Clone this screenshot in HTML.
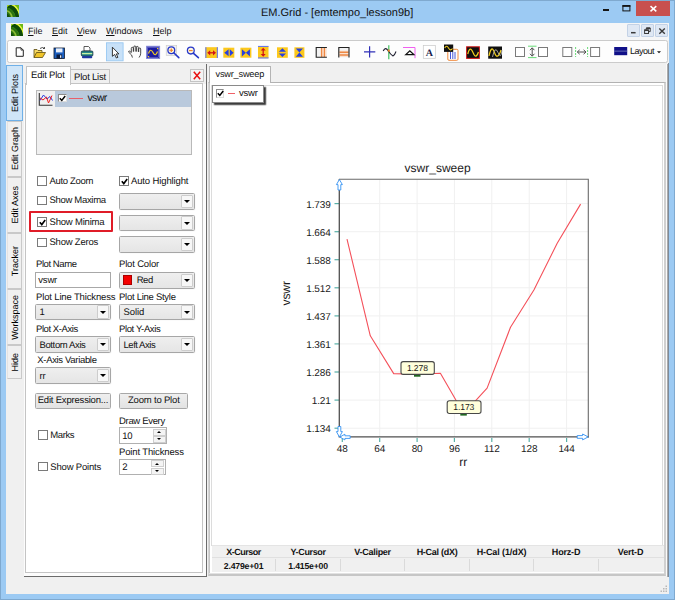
<!DOCTYPE html>
<html>
<head>
<meta charset="utf-8">
<title>EM.Grid</title>
<style>
html,body{margin:0;padding:0;}
body{text-rendering:geometricPrecision;width:675px;height:600px;overflow:hidden;background:#9ccaf3;font-family:"Liberation Sans",sans-serif;font-size:9px;color:#000;position:relative;}
.a{position:absolute;}
.t{position:absolute;white-space:nowrap;line-height:1;}
#win{left:0;top:0;width:675px;height:600px;background:#9ccaf3;box-sizing:border-box;border:1px solid #7fa9cf;}
#title{left:261px;top:7.6px;font-size:11px;color:#111;}
.mdib{top:24.3px;width:13.2px;height:12.6px;background:#dfe8f4;border:1px solid #c3d2e6;box-sizing:border-box;border-radius:1px;}
#client{left:6px;top:23px;width:663px;height:571px;background:#f0f0f0;}
#menubar{left:6px;top:23px;width:663px;height:17px;background:#f5f6f7;}
#toolbar{left:6.5px;top:40px;width:661.5px;height:23px;background:#fdfdfd;border:1px solid #cbcbcb;box-sizing:border-box;border-radius:2.5px;}
.menu{top:27px;font-size:9px;color:#111;}
.menu u{text-decoration:underline;}
/* vertical tabs */
.vtab{left:7px;width:15px;background:#f0f0f0;border:1px solid #c9c9c9;border-left-color:#e3e3e3;box-sizing:border-box;display:flex;align-items:center;justify-content:center;}
.vtab span{position:relative;left:0.8px;writing-mode:vertical-rl;transform:rotate(180deg);font-size:9px;line-height:1;white-space:nowrap;}
.vtab.sel{left:6px;width:17px;background:#cfe5f8;border-color:#6fb0e8;}
.vtxt{position:absolute;white-space:nowrap;font-size:9px;line-height:1;transform-origin:0 0;transform:rotate(-90deg);}
/* left dock */
#ldock{left:25px;top:83px;width:178px;height:490px;background:#fff;border:1px solid #c4c4c4;box-sizing:border-box;}
.cb{position:absolute;width:9.6px;height:9.6px;border:1px solid #7a7a7a;background:#fff;box-sizing:border-box;}
.c3{border-color:#8c8c8c #dcdcdc #dcdcdc #8c8c8c !important;}
.combo{position:absolute;width:76px;height:16.6px;border:1px solid #a6a6a6;background:linear-gradient(#efefef,#e5e5e5);box-sizing:border-box;border-radius:1.5px;box-shadow:0.5px 0.5px 0 0.3px #fafafa;}
.combo .btn{position:absolute;right:0.8px;top:0.8px;width:12.2px;height:13.2px;background:#f7f7f7;border:1px solid #cdcdcd;box-sizing:border-box;border-radius:1px;}
.combo .arr{position:absolute;right:3.9px;top:6.2px;width:0;height:0;border-left:3.1px solid transparent;border-right:3.1px solid transparent;border-top:3.2px solid #000;}
.btnx{position:absolute;border:1px solid #a8a8a8;background:linear-gradient(#efefef,#e2e2e2);box-sizing:border-box;text-align:center;font-size:9.5px;letter-spacing:-0.12px;white-space:nowrap;border-radius:1.5px;color:#111;}
.spin{width:48px;height:16.6px;background:#fff;border:1px solid #b0b0b0;box-sizing:border-box;}
.spin i{position:absolute;right:0.3px;width:13.2px;height:7.2px;background:#f4f4f4;border:1px solid #cfcfcf;box-sizing:border-box;}
.spin .su{top:0.5px}.spin .sd{top:7.8px}
.spin .su:after,.spin .sd:after{content:"";position:absolute;left:3.1px;top:1.3px;border-left:2.5px solid transparent;border-right:2.5px solid transparent;}
.spin .su:after{border-bottom:2.6px solid #000}.spin .sd:after{border-top:2.6px solid #000}
.th,.td{text-align:center;font-size:9px;color:#111;}
.th{font-weight:bold;letter-spacing:-0.45px;}
.td{font-weight:bold;font-size:8.7px;letter-spacing:-0.2px;}
.lbl{position:absolute;white-space:nowrap;font-size:9.5px;letter-spacing:-0.2px;line-height:1;color:#111;}
</style>
</head>
<body>
<div id="win" class="a"></div>

<!-- title bar -->
<svg class="a" style="left:7px;top:5px" width="12" height="12" viewBox="0 0 12 12"><rect width="12" height="12" fill="#6cb818"/><path d="M4 0Q11 3 12 11V5.5Q10 1.5 7.5 0Z" fill="#eaf640"/><path d="M0 0H4Q11 3 12 11V12H8.5Q7 4.5 0 2.5Z" fill="#0e4a0a"/><path d="M0 0H3.2Q1.2 0.8 0 2.2Z" fill="#a4d424"/><path d="M0 2.5Q7 4.5 8.5 12H0Z" fill="#2c7410"/><path d="M0 5Q4.8 6.8 5.8 12H4Q3.4 8 0 6.8Z" fill="#8cba34"/><path d="M0 8.5Q2.4 9.5 2.8 12H0Z" fill="#15500c"/></svg>
<div id="title" class="t">EM.Grid - [emtempo_lesson9b]</div>
<div class="a" style="left:603px;top:9.3px;width:6.3px;height:2.1px;background:#151515"></div>
<svg class="a" style="left:621px;top:4px" width="11" height="9" viewBox="621 4 11 9"><rect x="622.9" y="5.9" width="7" height="5" fill="none" stroke="#151515" stroke-width="1"/><rect x="622.4" y="5" width="8" height="1.8" fill="#151515"/></svg>
<div class="a" style="left:636px;top:1px;width:34px;height:14.5px;background:#c8504e"></div>
<svg class="a" style="left:649px;top:5px" width="9" height="8" viewBox="649 5 9 8"><path d="M650.5 6.1L656.3 11.4M656.3 6.1L650.5 11.4" stroke="#fff" stroke-width="1.5"/></svg>
<div id="client" class="a"></div>
<div id="menubar" class="a"></div>
<svg class="a" style="left:11px;top:24px" width="12" height="12" viewBox="0 0 12 12"><rect width="12" height="12" fill="#6cb818"/><path d="M4 0Q11 3 12 11V5.5Q10 1.5 7.5 0Z" fill="#eaf640"/><path d="M0 0H4Q11 3 12 11V12H8.5Q7 4.5 0 2.5Z" fill="#0e4a0a"/><path d="M0 0H3.2Q1.2 0.8 0 2.2Z" fill="#a4d424"/><path d="M0 2.5Q7 4.5 8.5 12H0Z" fill="#2c7410"/><path d="M0 5Q4.8 6.8 5.8 12H4Q3.4 8 0 6.8Z" fill="#8cba34"/><path d="M0 8.5Q2.4 9.5 2.8 12H0Z" fill="#15500c"/></svg>
<div class="t menu" style="left:28px"><u>F</u>ile</div>
<div class="t menu" style="left:52px"><u>E</u>dit</div>
<div class="t menu" style="left:77px"><u>V</u>iew</div>
<div class="t menu" style="left:106px"><u>W</u>indows</div>
<div class="t menu" style="left:153px"><u>H</u>elp</div>
<!-- mdi buttons -->
<div class="a mdib" style="left:626.6px"></div>
<div class="a mdib" style="left:640.8px"></div>
<div class="a mdib" style="left:655px"></div>
<svg class="a" style="left:626px;top:24px" width="43" height="14" viewBox="626 24 43 14"><path d="M631 32.7H635.6" stroke="#3a3a3a" stroke-width="1.5"/><path d="M646.3 29.5V28H650.2V31.6H648.7" stroke="#3a3a3a" stroke-width="1" fill="none"/><rect x="644.6" y="29.9" width="3.9" height="3.6" fill="none" stroke="#3a3a3a" stroke-width="1"/><path d="M644.6 30.2H648.5M646.3 28.3H650.2" stroke="#3a3a3a" stroke-width="1.4"/><path d="M659.3 28.6L664.8 33.7M664.8 28.6L659.3 33.7" stroke="#3a3a3a" stroke-width="1.4"/></svg>
<div id="toolbar" class="a"></div>

<!-- vertical tabs -->
<div class="a vtab sel" style="top:65px;height:56px"><span>Edit Plots</span></div>
<div class="a vtab" style="top:121px;height:56px"><span>Edit Graph</span></div>
<div class="a vtab" style="top:177px;height:56px"><span>Edit Axes</span></div>
<div class="a vtab" style="top:233px;height:56px"><span>Tracker</span></div>
<div class="a vtab" style="top:289px;height:56px"><span>Workspace</span></div>
<div class="a vtab" style="top:345px;height:34px"><span>Hide</span></div>
<!-- left dock -->
<div class="a" style="left:24px;top:84px;width:182px;height:492px;background:#fcfcfc"></div>
<div id="ldock" class="a"></div>
<div class="a" style="left:24px;top:576px;width:183px;height:1px;background:#6b6b6b"></div>
<div class="a" style="left:206px;top:64px;width:1px;height:513px;background:#6b6b6b"></div>
<div class="a" style="left:70px;top:69px;width:40px;height:15px;background:#f0f0f0;border:1px solid #c4c4c4;box-sizing:border-box"></div>
<div class="a" style="left:26px;top:66px;width:45px;height:19px;background:#fff;border:1px solid #c4c4c4;border-bottom:none;box-sizing:border-box"></div>
<div class="lbl" style="left:31px;top:71px">Edit Plot</div>
<div class="lbl" style="left:74px;top:73px">Plot List</div>
<div class="a" style="left:190px;top:69px;width:14px;height:13px;background:#f4f4f4;border:1px solid #c4c4c4;box-sizing:border-box"></div>
<svg class="a" style="left:193px;top:71px" width="8" height="9" viewBox="0 0 8 9"><path d="M0.8 0.8L7.2 8.2M7.2 0.8L0.8 8.2" stroke="#e81010" stroke-width="1.5"/></svg>
<!-- list -->
<div class="a" style="left:36px;top:90px;width:156px;height:65px;background:#f0f0f0;border:1px solid #b9b9b9;box-sizing:border-box"></div>
<div class="a" style="left:55px;top:91px;width:136px;height:16px;background:#b9c9dc"></div>
<svg class="a" style="left:38px;top:92px" width="16" height="15" viewBox="0 0 16 15"><path d="M1.3 1V13.3H14.5" stroke="#333" stroke-width="1.1" fill="none"/><path d="M2 8.5L5.5 3L9 7L12 4.5L14.5 8.5" stroke="#2838e0" stroke-width="1" fill="none"/><path d="M2 6L5 8L8.5 5L10.5 11L14 3.5" stroke="#f02020" stroke-width="1" fill="none"/></svg>
<div class="cb c3" style="left:57.7px;top:93.7px;width:9px;height:8.8px"></div>
<svg class="a" style="left:58.8px;top:94.6px" width="7" height="7" viewBox="0 0 7 7"><path d="M0.8 3.2L2.8 5.4L6.2 1" stroke="#000" stroke-width="1.5" fill="none"/></svg>
<div class="a" style="left:69.3px;top:98px;width:13.7px;height:1.4px;background:#e8606a"></div>
<div class="lbl" style="left:87.4px;top:92.6px;font-size:10.5px;letter-spacing:-0.6px">vswr</div>
<!-- checkboxes -->
<div class="cb" style="left:37.3px;top:176px"></div><div class="lbl" style="left:49.5px;top:176.6px;letter-spacing:-0.33px;">Auto Zoom</div>
<div class="cb" style="left:119px;top:176px"></div><svg class="a" style="left:120.5px;top:177.5px" width="7" height="7" viewBox="0 0 7 7"><path d="M0.8 3.2L2.8 5.6L6.2 1" stroke="#000" stroke-width="1.6" fill="none"/></svg><div class="lbl" style="left:131px;top:176.6px;letter-spacing:-0.13px;">Auto Highlight</div>
<div class="cb" style="left:37.3px;top:195.6px"></div><div class="lbl" style="left:49.5px;top:196px;letter-spacing:-0.31px;">Show Maxima</div>
<div class="combo" style="left:119px;top:193px;height:16.6px"><div class="btn"></div><div class="arr"></div></div>
<div class="a" style="left:29px;top:211.3px;width:84px;height:21.2px;border:2px solid #e01c28;box-sizing:border-box;border-radius:1px"></div>
<div class="cb" style="left:37.3px;top:217.2px"></div><svg class="a" style="left:38.8px;top:218.7px" width="7" height="7" viewBox="0 0 7 7"><path d="M0.8 3.2L2.8 5.6L6.2 1" stroke="#000" stroke-width="1.6" fill="none"/></svg><div class="lbl" style="left:49.5px;top:217.7px;letter-spacing:-0.19px;">Show Minima</div>
<div class="combo" style="left:119px;top:214.7px;height:16.6px"><div class="btn"></div><div class="arr"></div></div>
<div class="cb" style="left:37.3px;top:237.5px"></div><div class="lbl" style="left:49.5px;top:238.2px;letter-spacing:-0.22px;">Show Zeros</div>
<div class="combo" style="left:119px;top:236.2px;height:16.6px"><div class="btn"></div><div class="arr"></div></div>
<!-- fields -->
<div class="lbl" style="left:36px;top:259.8px;letter-spacing:-0.43px;">Plot Name</div>
<div class="lbl" style="left:119px;top:259.8px;letter-spacing:-0.17px;">Plot Color</div>
<div class="a" style="left:35px;top:272px;width:76px;height:16.4px;background:#fff;border:1px solid #a8a8a8;box-sizing:border-box"></div><div class="lbl" style="left:38.3px;top:275.8px;">vswr</div>
<div class="combo" style="left:119px;top:272px;height:16.6px"><div class="btn"></div><div class="arr"></div></div>
<div class="a" style="left:122.5px;top:275.3px;width:9.8px;height:9.8px;background:#f40000;border:1px solid #a00;box-sizing:border-box"></div><div class="lbl" style="left:136.7px;top:275.7px;letter-spacing:-0.45px;">Red</div>
<div class="lbl" style="left:36px;top:292.5px;letter-spacing:-0.15px;">Plot Line Thickness</div>
<div class="lbl" style="left:119px;top:292.5px;letter-spacing:-0.27px;">Plot Line Style</div>
<div class="combo" style="left:35px;top:303.6px;height:16.6px"><div class="btn"></div><div class="arr"></div><div class="lbl" style="left:3.5px;top:3.6px;">1</div></div>
<div class="combo" style="left:119px;top:303.6px;height:16.6px"><div class="btn"></div><div class="arr"></div><div class="lbl" style="left:3.5px;top:3.6px;letter-spacing:-0.06px;">Solid</div></div>
<div class="lbl" style="left:36px;top:324.7px;letter-spacing:-0.43px;">Plot X-Axis</div>
<div class="lbl" style="left:119px;top:324.7px;letter-spacing:-0.37px;">Plot Y-Axis</div>
<div class="combo" style="left:35px;top:336.3px;height:16.6px"><div class="btn"></div><div class="arr"></div><div class="lbl" style="left:3.5px;top:3.6px;letter-spacing:-0.38px;">Bottom Axis</div></div>
<div class="combo" style="left:119px;top:336.3px;height:16.6px"><div class="btn"></div><div class="arr"></div><div class="lbl" style="left:3.5px;top:3.6px;letter-spacing:-0.47px;">Left Axis</div></div>
<div class="lbl" style="left:37.3px;top:355.6px;letter-spacing:-0.33px;">X-Axis Variable</div>
<div class="combo" style="left:35px;top:367px;height:16.6px"><div class="btn"></div><div class="arr"></div><div class="lbl" style="left:3.5px;top:3.6px;">rr</div></div>
<div class="btnx" style="left:35px;top:392.5px;width:75.8px;height:16px;line-height:14px;letter-spacing:-0.19px;">Edit Expression...</div>
<div class="btnx" style="left:119.4px;top:392.5px;width:68.8px;height:16px;line-height:14px;letter-spacing:-0.19px;">Zoom to Plot</div>
<div class="lbl" style="left:119px;top:416.6px;letter-spacing:-0.32px;">Draw Every</div>
<div class="a spin" style="left:119px;top:427.4px"><i class="su"></i><i class="sd"></i></div><div class="lbl" style="left:122.2px;top:431.6px;">10</div>
<div class="cb" style="left:38.4px;top:430.3px"></div><div class="lbl" style="left:50.3px;top:431.4px;letter-spacing:-0.40px;">Marks</div>
<div class="lbl" style="left:119px;top:447.6px;letter-spacing:-0.14px;">Point Thickness</div>
<div class="a spin" style="left:119px;top:458.8px;width:46.5px"><i class="su"></i><i class="sd"></i></div><div class="lbl" style="left:122.2px;top:462.8px;">2</div>
<div class="cb" style="left:38.4px;top:461.8px"></div><div class="lbl" style="left:50.3px;top:462.6px;letter-spacing:-0.18px;">Show Points</div>
<!-- toolbar icons -->
<svg class="a" style="left:0;top:40px" width="675" height="24" viewBox="0 40 675 24">
<!-- new -->
<path d="M16.2 47.8H21L23.3 50.1V56.3H16.2Z" fill="#fff" stroke="#222" stroke-width="1"/><path d="M21 47.8V50.1H23.3" fill="none" stroke="#222" stroke-width="0.8"/>
<!-- open -->
<path d="M34 57.5V49.5H37L38 50.5H42V52" fill="#f6d860" stroke="#5a4a10" stroke-width="0.8"/><path d="M34 57.5L36.5 52.5H45.5L42.5 57.5Z" fill="#f0c428" stroke="#5a4a10" stroke-width="0.8"/><path d="M40 48.5Q42.5 46.5 44.5 48.5M44.5 48.5V47M44.5 48.5H43" stroke="#222" stroke-width="0.8" fill="none"/>
<!-- save -->
<rect x="54" y="48" width="10.5" height="10.5" fill="#1c5fc0" stroke="#101828" stroke-width="0.8"/><rect x="56" y="48.4" width="6.5" height="4" fill="#e8eef8"/><rect x="56.5" y="54.5" width="5.5" height="4" fill="#0c1c3c"/><rect x="60" y="55.3" width="1.3" height="2.5" fill="#e8eef8"/>
<!-- print -->
<path d="M84 51V46.5H88.5L90 48V51Z" fill="#fff" stroke="#333" stroke-width="0.8"/><rect x="81.3" y="51" width="11.6" height="5" rx="1" fill="#2a8a8a" stroke="#123" stroke-width="0.7"/><rect x="82" y="53" width="10.2" height="1.2" fill="#c8f0a0"/><rect x="82" y="56" width="10.2" height="2.2" rx="0.8" fill="#2038a0"/>
<!-- select -->
<rect x="106.5" y="42.8" width="16.6" height="18" fill="#c8e1f8" stroke="#98c8f2" stroke-width="0.9"/>
<path d="M112.4 47.2V56.3L114.7 54.4L116.4 58L117.9 57.3L116.3 53.9H118.9Z" fill="#fdfdfd" stroke="#222" stroke-width="0.9" stroke-linejoin="round"/>
<!-- hand -->
<path d="M132.3 57.2L131.6 55L128.7 52.2Q128.3 51 129.6 51.1L131.3 52.6V48.4Q131.3 47.3 132.3 47.3Q133.3 47.3 133.3 48.4V51.2M133.7 51.2V47Q133.7 46 134.8 46Q135.9 46 135.9 47V51.2M136.3 51.2V47.4Q136.3 46.4 137.3 46.4Q138.3 46.4 138.3 47.4V51.4M138.7 51.6V49Q138.7 48 139.7 48Q140.7 48 140.7 49V53.2Q140.7 55.4 139.3 57.2" fill="none" stroke="#2a2a2a" stroke-width="0.85" stroke-linejoin="round" stroke-linecap="round"/>
<!-- scope -->
<rect x="146.6" y="46.3" width="13" height="12.2" fill="#1c1ca0" stroke="#8488d8" stroke-width="1"/><rect x="147.8" y="47.5" width="10.6" height="9.8" fill="none" stroke="#a8a8e0" stroke-width="0.4"/><path d="M148.5 53.5Q150.5 47.5 153 52.5T157.5 51.5" stroke="#f4d020" stroke-width="1.2" fill="none"/><rect x="148" y="56" width="1.2" height="1.2" fill="#f4d020"/><rect x="157" y="48" width="1.2" height="1.2" fill="#f4d020"/>
<!-- zoom in -->
<rect x="166.2" y="45.5" width="10.5" height="10" fill="#f0f0f0" stroke="#c8c8c8" stroke-width="0.6"/>
<circle cx="171.3" cy="50.3" r="3.4" fill="#fff8e0" stroke="#2838c8" stroke-width="1.3"/><path d="M174 53L178.8 57.6" stroke="#2838c8" stroke-width="1.6" stroke-linecap="round"/><path d="M169.5 50.3H173.1M171.3 48.5V52.1" stroke="#f08020" stroke-width="1.1"/>
<!-- zoom out -->
<circle cx="190.8" cy="50.6" r="3.4" fill="#fff8e0" stroke="#2838c8" stroke-width="1.3"/><path d="M193.5 53.3L198.4 57.6" stroke="#2838c8" stroke-width="1.6" stroke-linecap="round"/><path d="M189 50.6H192.6" stroke="#f08020" stroke-width="1.1"/>
<!-- 6 yellow icons -->
<rect x="205.4" y="47.2" width="12.3" height="10.8" fill="#fcc81c"/><rect x="205.3" y="47.2" width="1.1" height="10.8" fill="#6878ec"/><rect x="216.8" y="47.2" width="1.1" height="10.8" fill="#6878ec"/><path d="M207.2 52.8L210.2 50.2V55.4ZM216 52.8L213 50.2V55.4Z" fill="#d01418"/><path d="M209.5 52.8H214" stroke="#d01418" stroke-width="1.3"/>
<rect x="223.3" y="47.7" width="11" height="10" fill="#fcc81c"/><path d="M224.3 52.8L228.6 49.3V56.3ZM233.6 52.8L229.8 49.3V56.3Z" fill="#2840e0"/>
<rect x="240.4" y="47.7" width="11" height="10" fill="#fcc81c"/><path d="M241.9 49.2V56.4L245.9 52.8ZM249.9 49.2V56.4L245.9 52.8Z" fill="#2840e0"/>
<rect x="258" y="46.4" width="10.5" height="11.8" fill="#fcc81c"/><rect x="258" y="45.9" width="10.5" height="1.1" fill="#6878ec"/><rect x="258" y="57.4" width="10.5" height="1.1" fill="#6878ec"/><path d="M263.2 47.7L260.7 50.6H265.7ZM263.2 56.8L260.7 53.9H265.7Z" fill="#d01418"/><path d="M263.2 50V54.5" stroke="#d01418" stroke-width="1.3"/>
<rect x="277" y="47.3" width="10.8" height="10.5" fill="#fcc81c"/><path d="M282.4 48.3L278.8 51.8H286ZM282.4 57L278.8 53.5H286Z" fill="#2840e0"/>
<rect x="294.4" y="47.3" width="10" height="10.5" fill="#fcc81c"/><path d="M295.8 48.5H303L299.4 52.6ZM295.8 56.8H303L299.4 52.6Z" fill="#2840e0"/>
<!-- band icons -->
<rect x="316.2" y="47.5" width="10.5" height="9.8" fill="#f2f2f2"/><rect x="320.6" y="48" width="6" height="9" fill="#fbe2d0"/><path d="M321.6 48V57M324.4 48V57" stroke="#ee8844" stroke-width="1.3"/><path d="M326.9 47.5H316.2V57.3H326.9" fill="none" stroke="#222" stroke-width="1.1"/>
<rect x="338.8" y="47.5" width="10.2" height="9.8" fill="#f2f2f2"/><rect x="339.5" y="50.6" width="9" height="6.4" fill="#fbe2d0"/><path d="M339.5 52.2H348.5M339.5 55H348.5" stroke="#ee8844" stroke-width="1.5"/><path d="M338.8 57.5V47.5H349V57.5" fill="none" stroke="#222" stroke-width="1.1"/>
<!-- plus -->
<path d="M364 51.8H375.3M369.6 46.2V57.6" stroke="#3030b8" stroke-width="1.2"/>
<!-- sine w/ green -->
<path d="M388.8 45.3V59.2" stroke="#40c060" stroke-width="1.2"/><path d="M383.2 51Q385.5 46.5 388 50.5T393 56Q394.5 55.5 396 51.5" stroke="#223" stroke-width="1.1" fill="none"/><rect x="387.8" y="49.6" width="2" height="2" fill="#f08020"/>
<!-- magenta corner -->
<path d="M403 47.5H415V58.2" stroke="#f060f0" stroke-width="1" fill="none"/><path d="M405.8 54.6L409.8 50.8L413.8 54.6Z" stroke="#111" stroke-width="1.3" fill="none" stroke-linejoin="miter"/>
<!-- A -->
<rect x="423.3" y="45.5" width="12" height="12.8" fill="#fff" stroke="#c8c8c8" stroke-width="0.7"/>
<text x="429.3" y="55.8" font-family="Liberation Serif" font-weight="bold" font-size="10" text-anchor="middle" fill="#18204c">A</text>
<!-- scope+bars -->
<rect x="447.8" y="49.3" width="10.2" height="11" rx="1.2" fill="#fff" stroke="#f08838" stroke-width="1"/><path d="M450.5 52V59M452.8 52V59M455 52V59" stroke="#4858d8" stroke-width="1"/>
<rect x="444" y="44.5" width="9.2" height="7.4" fill="#101010"/><path d="M444.8 48Q446.5 44.5 448.5 48T452.5 48.5" stroke="#f4d020" stroke-width="1.1" fill="none"/>
<!-- red scope -->
<rect x="466.6" y="46.8" width="12.8" height="11.6" fill="#101010" stroke="#d01818" stroke-width="1"/><path d="M467.8 54Q470 45 473 52.5T478.4 52" stroke="#f4d020" stroke-width="1.2" fill="none"/>
<rect x="488.2" y="46.5" width="13.8" height="12.2" fill="#101010"/><path d="M489 56Q491.5 44 494.5 52.5T501 50" stroke="#f4d020" stroke-width="1.2" fill="none"/><path d="M492.5 57Q495 45 498 52.5T502 50" stroke="#b0b0b0" stroke-width="0.9" fill="none"/>
<!-- boxes -->
<rect x="515.5" y="47.5" width="9" height="9" fill="#fff" stroke="#7a7a7a" stroke-width="1"/>
<rect x="538.5" y="47.5" width="9" height="9" fill="#fff" stroke="#7a7a7a" stroke-width="1"/>
<path d="M528 46.2H536.5M528 57.6H536.5" stroke="#58d868" stroke-width="0.9"/><path d="M532.2 48V56M530 50.2L532.2 47.8L534.4 50.2M530 53.8L532.2 56.2L534.4 53.8" stroke="#505050" stroke-width="1" fill="none"/>
<rect x="562.8" y="47.5" width="9" height="9" fill="#fff" stroke="#7a7a7a" stroke-width="1"/>
<rect x="590.6" y="47.5" width="9" height="9" fill="#fff" stroke="#7a7a7a" stroke-width="1"/>
<path d="M575.6 47V57M587.6 47V57" stroke="#58d868" stroke-width="0.9" stroke-dasharray="2 1"/><path d="M577.4 52H585.9M579.7 49.8L577.3 52L579.7 54.2M583.6 49.8L586 52L583.6 54.2" stroke="#505050" stroke-width="1" fill="none"/>
<!-- layout -->
<rect x="614.2" y="47" width="13" height="8.2" fill="#101088"/><rect x="614.2" y="50.7" width="13" height="0.8" fill="#7880c0"/>
<path d="M657 51.2H661L659 53.3Z" fill="#111"/>
</svg>
<div class="t" style="left:630px;top:46.5px;font-size:9px;letter-spacing:-0.5px;color:#111">Layout</div>

<!-- plot dock -->
<div class="a" style="left:207px;top:64px;width:462px;height:513px;background:#f0f0f0"></div>
<div class="a" style="left:666px;top:64px;width:1px;height:512px;background:#fbfbfb"></div><div class="a" style="left:667px;top:64px;width:1px;height:513px;background:#acacac"></div><div class="a" style="left:668px;top:63px;width:1px;height:514px;background:#7e8a98"></div>
<div class="a" style="left:208px;top:82px;width:458px;height:494px;background:#fff;border-top:1px solid #b2b2b2;border-left:1px solid #d4d4d4;border-right:2px solid #d0d0d0;border-bottom:2px solid #c6c6c6;box-sizing:border-box"></div><div class="a" style="left:209px;top:83px;width:1px;height:491px;background:#c6c6c6"></div><div class="a" style="left:209px;top:573px;width:455px;height:1px;background:#e2e2e2"></div>
<div class="a" style="left:211px;top:85px;width:452px;height:461px;background:#fff;border:1px solid #dcdcdc;box-sizing:border-box"></div>
<div class="a" style="left:209px;top:66px;width:62px;height:17px;background:#fff;border:1px solid #b4b4b4;border-bottom:none;box-sizing:border-box"></div>
<div class="lbl" style="left:215.5px;top:70.3px;font-size:9.2px;letter-spacing:-0.2px">vswr_sweep</div>
<!-- legend -->
<div class="a" style="left:212px;top:85px;width:52px;height:18px;background:#fff;border:1px solid #8a8a8a;box-sizing:border-box;box-shadow:1.5px 1.5px 1.2px 0 #3c3c3c"></div>
<div class="cb c3" style="left:215.7px;top:89px;width:8.6px;height:8.8px"></div>
<svg class="a" style="left:216.8px;top:90px" width="7" height="7" viewBox="0 0 7 7"><path d="M0.8 3.2L2.8 5.4L6.2 1" stroke="#000" stroke-width="1.5" fill="none"/></svg>
<div class="a" style="left:228px;top:93px;width:7px;height:1.3px;background:#f06068"></div>
<div class="lbl" style="left:239px;top:89px">vswr</div>
<!-- chart -->
<svg class="a" style="left:0;top:0" width="675" height="600" viewBox="0 0 675 600" font-family="Liberation Sans" font-size="10" letter-spacing="-0.12" fill="#1a1a1a" text-rendering="geometricPrecision">
<path d="M340 203.6H588.5" stroke="#f0f0f0" stroke-width="1"/><path d="M334.5 203.6H339" stroke="#58b0a8" stroke-width="1.2"/><path d="M340 231.7H588.5" stroke="#f0f0f0" stroke-width="1"/><path d="M334.5 231.7H339" stroke="#58b0a8" stroke-width="1.2"/><path d="M340 259.7H588.5" stroke="#f0f0f0" stroke-width="1"/><path d="M334.5 259.7H339" stroke="#58b0a8" stroke-width="1.2"/><path d="M340 287.8H588.5" stroke="#f0f0f0" stroke-width="1"/><path d="M334.5 287.8H339" stroke="#58b0a8" stroke-width="1.2"/><path d="M340 315.9H588.5" stroke="#f0f0f0" stroke-width="1"/><path d="M334.5 315.9H339" stroke="#58b0a8" stroke-width="1.2"/><path d="M340 343.9H588.5" stroke="#f0f0f0" stroke-width="1"/><path d="M334.5 343.9H339" stroke="#58b0a8" stroke-width="1.2"/><path d="M340 372.0H588.5" stroke="#f0f0f0" stroke-width="1"/><path d="M334.5 372.0H339" stroke="#58b0a8" stroke-width="1.2"/><path d="M340 400.1H588.5" stroke="#f0f0f0" stroke-width="1"/><path d="M334.5 400.1H339" stroke="#58b0a8" stroke-width="1.2"/><path d="M340 428.2H588.5" stroke="#f0f0f0" stroke-width="1"/><path d="M334.5 428.2H339" stroke="#58b0a8" stroke-width="1.2"/><path d="M342.3 438V442" stroke="#58b0a8" stroke-width="1.2"/><path d="M379.7 179.5V437" stroke="#f0f0f0" stroke-width="1"/><path d="M379.7 438V442" stroke="#58b0a8" stroke-width="1.2"/><path d="M417.1 179.5V437" stroke="#f0f0f0" stroke-width="1"/><path d="M417.1 438V442" stroke="#58b0a8" stroke-width="1.2"/><path d="M454.4 179.5V437" stroke="#f0f0f0" stroke-width="1"/><path d="M454.4 438V442" stroke="#58b0a8" stroke-width="1.2"/><path d="M491.8 179.5V437" stroke="#f0f0f0" stroke-width="1"/><path d="M491.8 438V442" stroke="#58b0a8" stroke-width="1.2"/><path d="M529.2 179.5V437" stroke="#f0f0f0" stroke-width="1"/><path d="M529.2 438V442" stroke="#58b0a8" stroke-width="1.2"/><path d="M566.6 179.5V437" stroke="#f0f0f0" stroke-width="1"/><path d="M566.6 438V442" stroke="#58b0a8" stroke-width="1.2"/>
<path d="M339.3 179V436.9H589" stroke="#505050" stroke-width="1.3" fill="none"/>
<path d="M339 179.3H588.3V437.3" stroke="#6a6a6a" stroke-width="1.1" fill="none"/>
<path d="M347.0 239.1 L370.3 335.8 L393.7 373.6 L417.1 374.3 L440.4 373.2 L463.8 413.7 L487.1 388.1 L510.5 327.3 L533.9 290.0 L557.2 243.3 L580.6 204.1" stroke="#f4505a" stroke-width="1.1" fill="none" stroke-linejoin="round"/>
<text x="330.7" y="207.6" text-anchor="end">1.739</text><text x="330.7" y="235.7" text-anchor="end">1.664</text><text x="330.7" y="263.7" text-anchor="end">1.588</text><text x="330.7" y="291.8" text-anchor="end">1.512</text><text x="330.7" y="319.9" text-anchor="end">1.437</text><text x="330.7" y="347.9" text-anchor="end">1.361</text><text x="330.7" y="376.0" text-anchor="end">1.286</text><text x="330.7" y="404.1" text-anchor="end">1.21</text><text x="330.7" y="432.2" text-anchor="end">1.134</text><text x="342.3" y="452" text-anchor="middle">48</text><text x="379.7" y="452" text-anchor="middle">64</text><text x="417.1" y="452" text-anchor="middle">80</text><text x="454.4" y="452" text-anchor="middle">96</text><text x="491.8" y="452" text-anchor="middle">112</text><text x="529.2" y="452" text-anchor="middle">128</text><text x="566.6" y="452" text-anchor="middle">144</text>
<text x="437.6" y="172" font-size="12" letter-spacing="0" text-anchor="middle">vswr_sweep</text>
<text x="463.3" y="466" font-size="12" letter-spacing="0" text-anchor="middle">rr</text>
<text transform="translate(290,293.3) rotate(-90)" font-size="12" text-anchor="middle">vswr</text>
<!-- tooltips -->
<rect x="414" y="373.9" width="6.5" height="2.8" fill="#206820"/>
<rect x="401" y="361.6" width="33.3" height="12.8" rx="2.2" fill="#ffffdc" stroke="#484848" stroke-width="1.1"/>
<text x="417.4" y="371.2" font-size="8.6" text-anchor="middle">1.278</text>
<rect x="460.3" y="412.8" width="6.5" height="2.8" fill="#206820"/>
<rect x="447.2" y="400.7" width="33.8" height="12.8" rx="2.2" fill="#ffffdc" stroke="#484848" stroke-width="1.1"/>
<text x="463.8" y="410.4" font-size="8.6" text-anchor="middle">1.173</text>
<!-- blue arrows -->
<path d="M339.4 179.6L336.4 184.6H338V190H340.8V184.6H342.4Z" fill="#fff" stroke="#3392f4" stroke-width="0.9" stroke-linejoin="round"/>
<path d="M339.4 437L336.4 431.6H338V426.5H340.8V431.6H342.4Z" fill="#fff" stroke="#3392f4" stroke-width="0.9" stroke-linejoin="round"/>
<path d="M339.9 437L344.9 434.2V435.8H350.2V438.4H344.9V439.9Z" fill="#fff" stroke="#3392f4" stroke-width="0.9" stroke-linejoin="round"/>
<path d="M588.2 436.9L582.6 434V435.6H577.2V438.3H582.6V439.9Z" fill="#fff" stroke="#3392f4" stroke-width="0.9" stroke-linejoin="round"/>
</svg>
<!-- table -->
<div class="a" style="left:212px;top:545px;width:452px;height:12px;background:#f0f0f0;border-top:1px solid #e4e4e4;box-sizing:border-box"></div>
<div class="a" style="left:212px;top:557px;width:452px;height:15px;background:#f0f0f0;border-top:1px solid #e0e0e0;box-sizing:border-box"></div>
<div class="t th" style="left:211.3px;top:548px;width:64.5px;letter-spacing:-0.50px">X-Cursor</div><div class="t td" style="left:211.3px;top:561.8px;width:64.5px">2.479e+01</div><div class="t th" style="left:275.8px;top:548px;width:64.5px;letter-spacing:-0.35px">Y-Cursor</div><div class="t td" style="left:275.8px;top:561.8px;width:64.5px">1.415e+00</div><div class="a" style="left:275.3px;top:559px;width:1px;height:12px;background:#dadada"></div><div class="t th" style="left:340.3px;top:548px;width:64.5px;letter-spacing:-0.27px">V-Caliper</div><div class="a" style="left:339.8px;top:559px;width:1px;height:12px;background:#dadada"></div><div class="t th" style="left:404.8px;top:548px;width:64.5px;letter-spacing:-0.27px">H-Cal (dX)</div><div class="a" style="left:404.3px;top:559px;width:1px;height:12px;background:#dadada"></div><div class="t th" style="left:469.3px;top:548px;width:64.5px;letter-spacing:-0.10px">H-Cal (1/dX)</div><div class="a" style="left:468.8px;top:559px;width:1px;height:12px;background:#dadada"></div><div class="t th" style="left:533.8px;top:548px;width:64.5px;letter-spacing:-0.17px">Horz-D</div><div class="a" style="left:533.3px;top:559px;width:1px;height:12px;background:#dadada"></div><div class="t th" style="left:598.3px;top:548px;width:64.5px;letter-spacing:-0.19px">Vert-D</div><div class="a" style="left:597.8px;top:559px;width:1px;height:12px;background:#dadada"></div>
<!-- status bar -->
<div class="a" style="left:6px;top:577px;width:663px;height:17px;background:#f0f0f0"></div>
<svg class="a" style="left:660px;top:585px" width="8" height="8" viewBox="0 0 8 8" fill="#b8b8b8"><rect x="5.5" y="0.5" width="1.5" height="1.5"/><rect x="3" y="3" width="1.5" height="1.5"/><rect x="5.5" y="3" width="1.5" height="1.5"/><rect x="0.5" y="5.5" width="1.5" height="1.5"/><rect x="3" y="5.5" width="1.5" height="1.5"/><rect x="5.5" y="5.5" width="1.5" height="1.5"/></svg>
</body>
</html>
